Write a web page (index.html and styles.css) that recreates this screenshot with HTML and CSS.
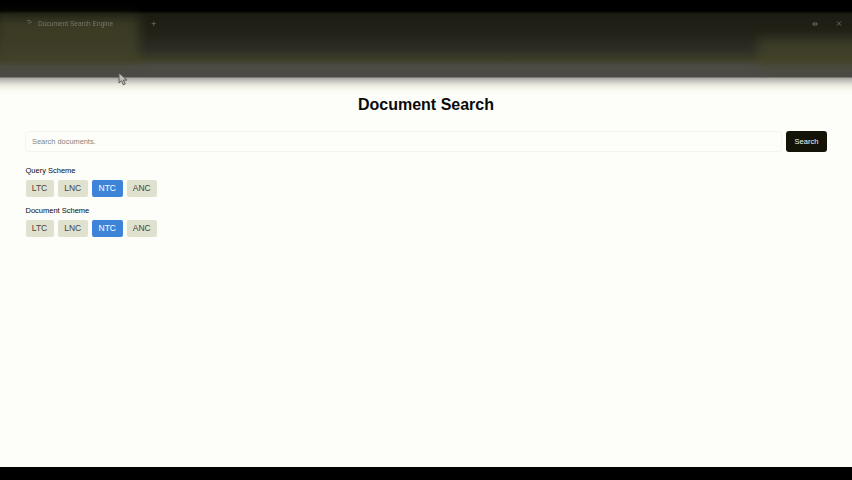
FILE: index.html
```html
<!DOCTYPE html>
<html lang="en">
<head>
<meta charset="utf-8">
<title>Document Search</title>
<link rel="stylesheet" href="styles.css">
</head>
<body>
<header class="chrome">
  <div class="glow glow-tab"></div>
  <div class="glow glow-tools"></div>
  <div class="tabs">
    <svg class="tab-icon" width="7" height="7" viewBox="0 0 7 7"><path d="M1 2l2-1 3 3M2 4h2" /></svg>
    <span class="tab">Document Search Engine</span>
    <span class="new-tab">+</span>
    <span class="window-icons">
      <svg width="8" height="8" viewBox="0 0 8 8"><path d="M2 3h4v2H2z" /></svg>
      <svg width="8" height="8" viewBox="0 0 8 8"><path d="M2 1.5l4 4M6 1.5l-4 4" /></svg>
    </span>
  </div>
  <svg class="cursor" width="11" height="14" viewBox="0 0 11 14"><path d="M1 1v10l2.5-2.2 1.8 4 2-.9-1.9-3.8H9z" /></svg>
</header>
<main class="page">
  <h1>Document Search</h1>
  <form class="search">
    <input type="text" placeholder="Search documents.">
    <button type="button">Search</button>
  </form>
  <section class="scheme">
    <h2>Query Scheme</h2>
    <div class="chips"><span>LTC</span><span>LNC</span><span class="active">NTC</span><span>ANC</span></div>
  </section>
  <section class="scheme">
    <h2>Document Scheme</h2>
    <div class="chips"><span>LTC</span><span>LNC</span><span class="active">NTC</span><span>ANC</span></div>
  </section>
</main>
<footer class="bottom"></footer>
</body>
</html>
```
FILE: styles.css
```css
* { box-sizing: border-box; }
body {
  margin: 0;
  height: 480px;
  overflow: hidden;
  display: flex;
  flex-direction: column;
  background: #fdfdfa;
  color: #0a0a0a;
  font-family: "Liberation Sans", Arial, sans-serif;
}
.chrome {
  position: relative;
  flex: none;
  height: 95px;
  padding-top: 13px;
  background: linear-gradient(#000 0, #000 11px, #1c1c12 14px, #222218 34px, #2d2d26 50px, #3d3d26 59px, #4b4b44 66px, #4b4b44 77px, #a8a8a2 78px, #c6c6c0 81px, #e8e8de 85px, #fafaf2 90px, #fdfdfa 95px);
}
.glow { position: absolute; filter: blur(6px); background: #45452a; opacity: .75; }
.glow-tab { left: -4px; top: 17px; width: 143px; height: 46px; }
.glow-tools { left: 758px; top: 39px; width: 110px; height: 27px; }
.tabs {
  position: relative;
  display: flex;
  align-items: center;
  height: 21px;
  padding: 0 9px 0 26px;
  color: #77776e;
  font-size: 6.6px;
}
.tab-icon { margin: -2px 5px 0 0; }
.tab { width: 113px; white-space: nowrap; filter: blur(.4px); }
.new-tab { width: 8px; font-size: 9px; }
.window-icons { display: flex; gap: 16px; margin-left: auto; }
.tabs path { fill: none; stroke: #68685e; }
.cursor { position: absolute; left: 118px; top: 72px; }
.cursor path { fill: #bdbdb8; stroke: #55554c; stroke-width: .9; }
.page { flex: 1; padding: 0 25px; }
h1 {
  margin: 0;
  height: 36px;
  text-align: center;
  font-size: 16px;
  line-height: 19px;
}
.search { display: flex; gap: 4px; height: 21px; margin-bottom: 14px; }
.search input {
  flex: 1;
  padding: 0 6px;
  border: 1px solid #f3f3f1;
  border-radius: 3px;
  background: transparent;
  font: 7.4px "Liberation Sans", Arial, sans-serif;
}
.search input::placeholder { color: #85857c; opacity: 1; }
.search button {
  width: 41px;
  padding: 0;
  border: 0;
  border-radius: 3px;
  background: #131308;
  color: #f5f5ee;
  font: 7.5px "Liberation Sans", Arial, sans-serif;
}
.scheme { height: 40px; padding-left: .5px; }
h2 { margin: 0 0 5px; font-size: 7.5px; font-weight: 400; line-height: 9px; }
.chips { display: flex; gap: 4px; }
.chips span {
  width: 30.5px;
  height: 17px;
  border-radius: 2px;
  background: #e1e1d0;
  color: #44443e;
  font-size: 8.5px;
  line-height: 17px;
  text-align: center;
}
.chips span:first-child { width: 28px; }
.chips .active { background: #3d84d8; color: #fff; }
.bottom { flex: none; height: 13px; background: #000; }
```
